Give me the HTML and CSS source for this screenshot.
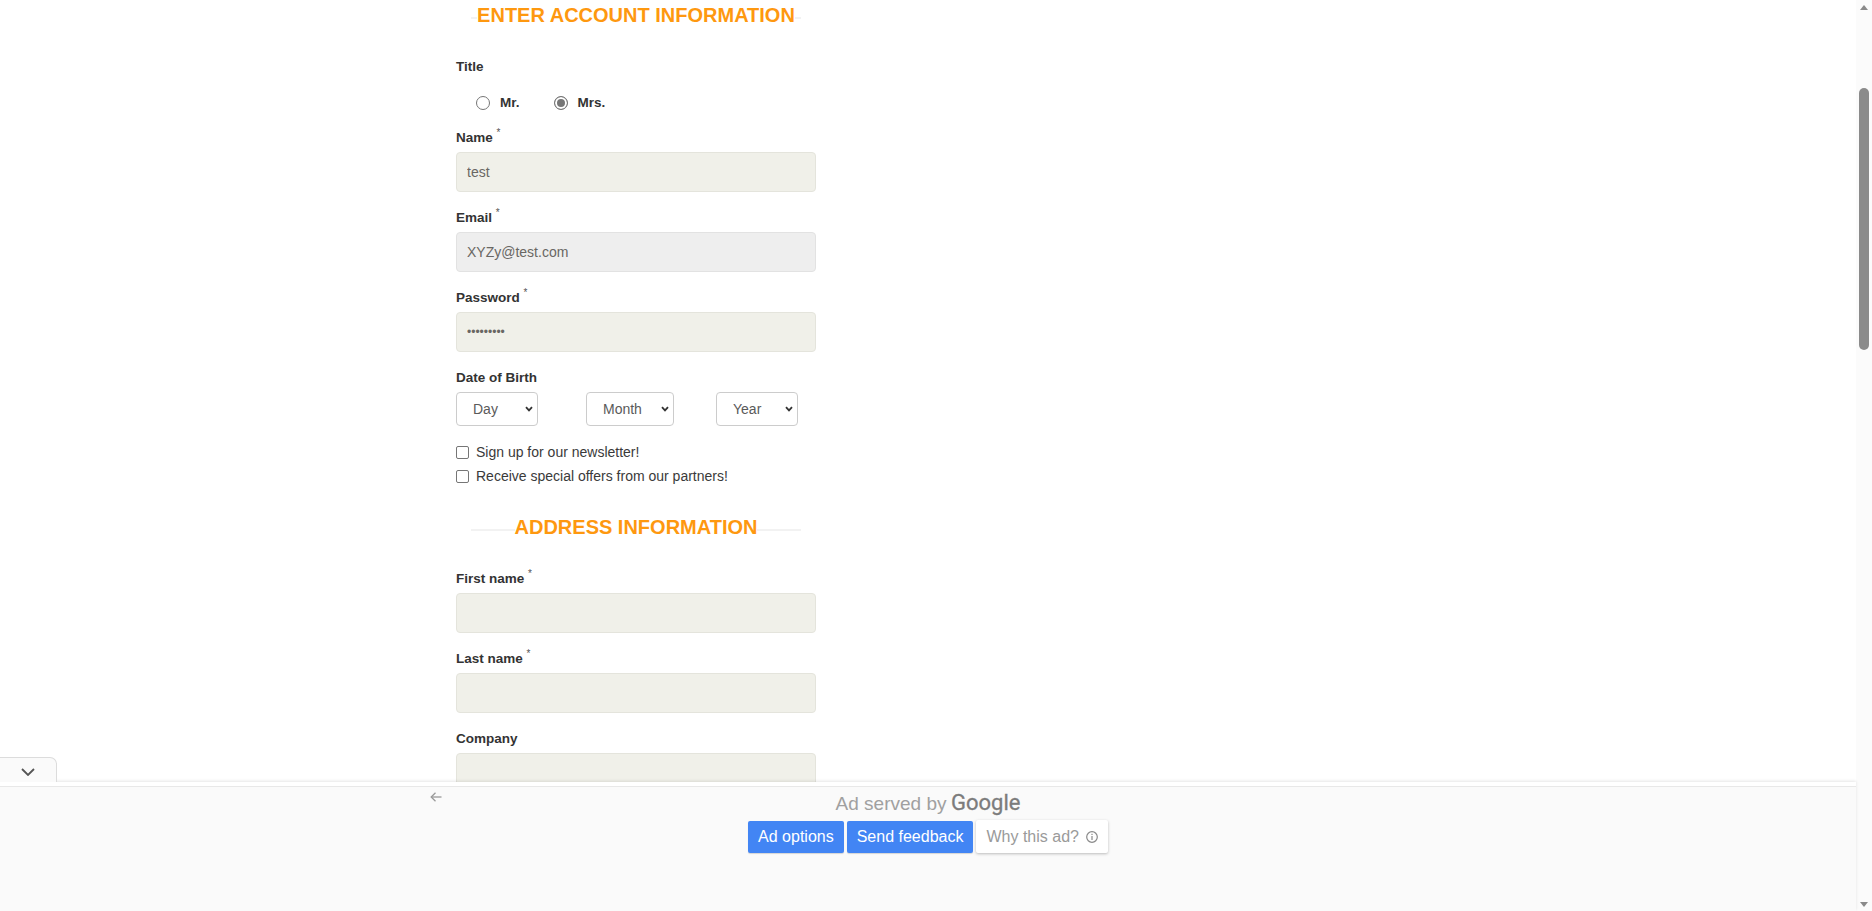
FILE: index.html
```html
<!DOCTYPE html>
<html>
<head>
<meta charset="utf-8">
<title>Signup</title>
<link rel="stylesheet" href="styles.css">
</head>
<body>
<div class="app">
  <div class="main">
    <div class="page">
      <form class="form">
        <h2 class="title"><span>ENTER ACCOUNT INFORMATION</span></h2>

        <div class="label title-label">Title</div>
        <div class="radios">
          <label class="radio radio-first"><input type="radio" name="title"> Mr.</label>
          <label class="radio"><input type="radio" name="title" checked> Mrs.</label>
        </div>

        <div class="field field-first">
          <label class="label">Name <span class="req">*</span></label>
          <input class="input" type="text" value="test">
        </div>
        <div class="field">
          <label class="label">Email <span class="req">*</span></label>
          <input class="input input-disabled" type="text" value="XYZy@test.com" readonly>
        </div>
        <div class="field">
          <label class="label">Password <span class="req">*</span></label>
          <input class="input input-pw" type="password" value="123456789">
        </div>

        <div class="field">
          <label class="label">Date of Birth</label>
          <div class="dob">
            <div class="sel sel-day">
              <select><option>Day</option></select>
              <svg class="chev" width="8" height="6" viewBox="0 0 8 6"><polyline points="1,1.2 4,4.4 7,1.2" fill="none" stroke="#333" stroke-width="1.8"/></svg>
            </div>
            <div class="sel sel-month">
              <select><option>Month</option></select>
              <svg class="chev" width="8" height="6" viewBox="0 0 8 6"><polyline points="1,1.2 4,4.4 7,1.2" fill="none" stroke="#333" stroke-width="1.8"/></svg>
            </div>
            <div class="sel sel-year">
              <select><option>Year</option></select>
              <svg class="chev" width="8" height="6" viewBox="0 0 8 6"><polyline points="1,1.2 4,4.4 7,1.2" fill="none" stroke="#333" stroke-width="1.8"/></svg>
            </div>
          </div>
        </div>

        <div class="checks">
          <label class="check"><input type="checkbox"> Sign up for our newsletter!</label>
          <label class="check"><input type="checkbox"> Receive special offers from our partners!</label>
        </div>

        <h2 class="title title-address"><span>ADDRESS INFORMATION</span></h2>

        <div class="field field-address">
          <label class="label">First name <span class="req">*</span></label>
          <input class="input" type="text">
        </div>
        <div class="field">
          <label class="label">Last name <span class="req">*</span></label>
          <input class="input" type="text">
        </div>
        <div class="field">
          <label class="label">Company</label>
          <input class="input" type="text">
        </div>
      </form>
    </div>

    <div class="adbar">
      <div class="tab">
        <svg width="14" height="8" viewBox="0 0 14 8"><polyline points="1,1 7,7 13,1" fill="none" stroke="#555" stroke-width="1.8"/></svg>
      </div>
      <div class="ad-inner">
        <div class="ad-head">
          <div class="back">
            <svg width="12" height="10" viewBox="0 0 12 10"><line x1="11.5" y1="5" x2="1" y2="5" stroke="#9a9a9a" stroke-width="1.3"/><polyline points="5.5,0.8 1.2,5 5.5,9.2" fill="none" stroke="#9a9a9a" stroke-width="1.3"/></svg>
          </div>
          <div class="served"><span class="served-by">Ad served by</span> <span class="google">Google</span></div>
          <div></div>
        </div>
        <div class="ad-buttons">
          <span class="btn btn-blue">Ad options</span>
          <span class="btn btn-blue">Send feedback</span>
          <span class="btn btn-white">Why this ad?
            <svg class="info" width="12" height="12" viewBox="0 0 12 12"><circle cx="6" cy="6" r="5.3" fill="none" stroke="#8a8a8a" stroke-width="1.2"/><rect x="5.4" y="5" width="1.2" height="4" fill="#8a8a8a"/><rect x="5.4" y="2.8" width="1.2" height="1.2" fill="#8a8a8a"/></svg>
          </span>
        </div>
      </div>
    </div>
  </div>

  <div class="scrollbar">
    <div class="sb-btn"><span class="tri-up"></span></div>
    <div class="sb-track"><div class="sb-thumb"></div></div>
    <div class="sb-btn sb-btn-down"><span class="tri-down"></span></div>
  </div>
</div>
</body>
</html>
```

FILE: styles.css
```css
* { box-sizing: border-box; }

html, body {
  margin: 0;
  padding: 0;
  height: 911px;
  overflow: hidden;
  background: #fff;
  font-family: "Liberation Sans", Arial, sans-serif;
  color: #333;
}

.app {
  display: flex;
  width: 1872px;
  height: 911px;
}

.main {
  flex: 1;
  display: flex;
  flex-direction: column;
  min-width: 0;
}

.page {
  height: 782px;
  overflow: hidden;
  padding-left: 456px;
}

.form {
  width: 360px;
  padding-top: 3px;
  margin: 0;
}

/* Section headings */
.title {
  margin: 0 15px;
  height: 24px;
  line-height: 24px;
  font-size: 20px;
  font-weight: 700;
  color: #FE980F;
  text-align: center;
  background: linear-gradient(#f2f2f2, #f2f2f2) no-repeat 0 14px / 100% 2px;
}
.title span {
  background: #fff;
}
.title-address {
  margin-top: 31px;
}

/* Labels */
.label {
  display: block;
  font-size: 13.5px;
  font-weight: 700;
  line-height: 18px;
  height: 18px;
  color: #333;
}
.title-label {
  margin-top: 31px;
}
.req {
  font-size: 10px;
  line-height: 10px;
  vertical-align: top;
  font-weight: 400;
  color: #555;
  position: relative;
  top: -1px;
}

/* Radios */
.radios {
  margin-top: 17px;
  height: 20px;
  display: flex;
  align-items: center;
  padding-left: 20px;
}
.radio {
  display: flex;
  align-items: center;
  font-size: 13.5px;
  font-weight: 700;
  color: #333;
  line-height: 20px;
}
.radio-first {
  margin-right: 34px;
}
.radio input {
  appearance: none;
  -webkit-appearance: none;
  width: 14px;
  height: 14px;
  margin: 0 10px 0 0;
  border: 1px solid #767676;
  border-radius: 50%;
  background: #fff;
}
.radio input:checked {
  background: #767676;
  box-shadow: inset 0 0 0 2px #fff;
}

/* Fields */
.field {
  margin-top: 17px;
}
.field-first {
  margin-top: 16px;
}
.field-address {
  margin-top: 31px;
}
.field .label {
  margin-bottom: 5px;
}

.input {
  display: block;
  width: 360px;
  height: 40px;
  border: 1px solid #e4e4dc;
  border-radius: 4px;
  background: #F0F0E9;
  padding: 0 10px;
  font-family: "Liberation Sans", Arial, sans-serif;
  font-size: 14px;
  color: #696763;
  outline: none;
}
.input-disabled {
  background: #eeeeee;
  border-color: #e2e2e2;
}
.input-pw {
  font-size: 12px;
}

/* Date of birth */
.dob {
  display: grid;
  grid-template-columns: 130px 130px 130px;
  margin-top: 1px;
}
.sel {
  position: relative;
  height: 34px;
}
.sel select {
  appearance: none;
  -webkit-appearance: none;
  height: 34px;
  border: 1px solid #cccccc;
  border-radius: 4px;
  background: #fff;
  padding: 0 0 0 16px;
  font-family: "Liberation Sans", Arial, sans-serif;
  font-size: 14px;
  color: #5a5a5a;
  outline: none;
}
.sel-day select { width: 82px; }
.sel-month select { width: 88px; }
.sel-year select { width: 82px; }
.chev {
  position: absolute;
  top: 14px;
  pointer-events: none;
}
.sel-day .chev { left: 69px; }
.sel-month .chev { left: 75px; }
.sel-year .chev { left: 69px; }

/* Checkboxes */
.checks {
  margin-top: 18px;
  display: flex;
  flex-direction: column;
  gap: 8px;
}
.check {
  display: flex;
  align-items: center;
  height: 16px;
  font-size: 14px;
  color: #3a3a3a;
}
.check input {
  appearance: none;
  -webkit-appearance: none;
  width: 13px;
  height: 13px;
  margin: 0 7px 0 0;
  border: 1px solid #767676;
  border-radius: 2px;
  background: #fff;
}

/* Ad bar */
.adbar {
  position: relative;
  height: 129px;
  background: #fff;
  box-shadow: 0 -1px 3px rgba(0, 0, 0, 0.10);
  display: flex;
  flex-direction: column;
}
.tab {
  position: absolute;
  left: 0;
  bottom: 100%;
  width: 57px;
  height: 25px;
  background: #fafafa;
  border: 1px solid #dcdcdc;
  border-left: 0;
  border-bottom: 0;
  border-top-right-radius: 7px;
  display: flex;
  align-items: center;
  justify-content: center;
  padding-top: 3px;
}
.ad-inner {
  margin-top: 4px;
  flex: 1;
  border-top: 1px solid #e8e8e8;
  background: #fafafa;
}
.ad-head {
  display: grid;
  grid-template-columns: 1fr auto 1fr;
  padding-top: 3px;
}
.back {
  padding-left: 430px;
  padding-top: 2px;
  line-height: 0;
}
.served {
  height: 26px;
  line-height: 26px;
  white-space: nowrap;
}
.served-by {
  font-size: 19px;
  color: #a0a0a0;
}
.google {
  font-family: Roboto, "Liberation Sans", Arial, sans-serif;
  font-weight: 400;
  font-size: 22px;
  color: #7c7c7c;
  -webkit-text-stroke: 0.3px #7c7c7c;
}
.ad-buttons {
  margin-top: 5px;
  display: flex;
  justify-content: center;
  align-items: center;
  gap: 3px;
}
.btn {
  display: inline-flex;
  align-items: center;
  height: 32px;
  padding: 0 10px;
  font-size: 16px;
  border-radius: 2px;
  white-space: nowrap;
}
.btn-blue {
  background: #4285f4;
  color: #fff;
  box-shadow: 0 1px 1px rgba(0, 0, 0, 0.15);
}
.btn-white {
  height: 33px;
  margin-top: -1px;
  background: #fff;
  color: #9a9a9a;
  box-shadow: 0 1px 3px rgba(0, 0, 0, 0.25);
  gap: 7px;
}

/* Fake scrollbar */
.scrollbar {
  width: 16px;
  height: 911px;
  background: #fbfbfb;
  display: flex;
  flex-direction: column;
}
.sb-btn {
  height: 16px;
  display: flex;
  justify-content: center;
  align-items: flex-start;
  padding-top: 5px;
}
.sb-btn-down {
  align-items: flex-end;
  padding-top: 0;
  padding-bottom: 4px;
}
.tri-up {
  width: 0;
  height: 0;
  border-left: 4px solid transparent;
  border-right: 4px solid transparent;
  border-bottom: 5px solid #8a8a8a;
}
.tri-down {
  width: 0;
  height: 0;
  border-left: 4px solid transparent;
  border-right: 4px solid transparent;
  border-top: 5px solid #8a8a8a;
}
.sb-track {
  flex: 1;
  display: flex;
  justify-content: center;
}
.sb-thumb {
  margin-top: 72px;
  width: 10px;
  height: 262px;
  border-radius: 5px;
  background: #8b8b8b;
}
```
